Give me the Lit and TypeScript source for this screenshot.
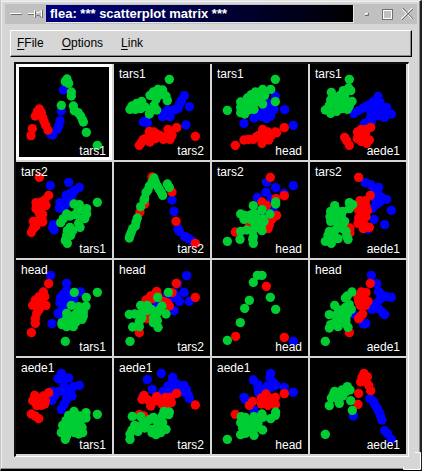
import { LitElement, html, svg, css } from "lit";
import { customElement, property } from "lit/decorators.js";

interface Layer {
  tone: "red" | "green" | "blue";
  dots: string;
}

interface Panel {
  y?: string;
  x: string;
  /** Left edge of the panel in the units of its dots. */
  left: number;
  layers: Layer[];
}

const blue = (dots: string): Layer => ({ tone: "blue", dots });
const red = (dots: string): Layer => ({ tone: "red", dots });
const green = (dots: string): Layer => ({ tone: "green", dots });

const panels: Panel[] = [
  {
    x: "tars1", left: 18, layers: [
      blue("160,90 154,153 150,182 147,196 142,208 128,225 122,222"),
      red("63,227 67,206 76,168 82,155 88,147 94,158 98,172 102,184 107,196 114,210 88,160"),
      green("171,57 166,65 176,70 172,66 184,96 184,108 154,136 190,138 193,152 204,158 212,168 218,180 220,186 229,217 262,256"),
    ],
  },
  {
    y: "tars1", x: "tars2", left: 12, layers: [
      blue("223,107 214,122 208,134 204,146 238,140 228,195 192,150 180,158 164,158 158,170 180,170 174,150 100,186 112,188 108,182"),
      red("200,203 174,208 182,216 186,226 180,238 160,238 172,228 150,226 140,222 136,236 120,246 118,214 132,216 100,238 88,256 94,248 256,229 124,230 110,234"),
      green("178,58 144,88 158,90 130,96 120,106 150,104 168,108 172,122 138,118 95,124 80,130 66,138 60,148 76,148 92,146 104,140 132,136 140,150 118,162 124,152"),
    ],
  },
  {
    y: "tars1", x: "head", left: 306, layers: [
      blue("496,108 476,130 476,144 492,148 480,150 524,149 462,152 448,164 432,174 456,170 482,168 470,160 470,176 402,190 550,196"),
      red("376,256 402,240 416,238 430,238 440,230 458,208 458,220 474,216 496,216 500,218 484,226 470,232 456,236 456,250 446,226 476,240 523,203"),
      green("496,58 482,88 458,88 436,96 424,104 450,104 464,106 412,114 392,126 392,142 392,158 404,162 416,150 432,148 440,126 424,128 408,134 458,132 496,125 452,118 352,151 436,112"),
    ],
  },
  {
    y: "tars1", x: "aede1", left: 6, layers: [
      blue("210,109 206,124 194,126 216,128 178,136 190,140 208,142 236,142 250,162 228,160 230,172 212,168 204,156 188,154 166,144 152,152 138,160 192,166 186,176 170,190 190,186"),
      red("110,232 116,242 124,256 188,202 176,208 160,208 148,216 148,236 160,226 172,224 184,240 176,250 160,244 168,238"),
      green("124,58 70,97 122,84 106,92 128,92 96,106 84,112 68,120 110,110 132,124 112,124 92,126 76,130 64,136 52,150 68,160 86,154 102,146 124,138 118,148 94,140"),
    ],
  },
  {
    y: "tars2", x: "tars1", left: 18, layers: [
      blue("121,82 176,73 208,88 194,98 180,106 168,112 172,124 150,134 148,150 160,142 170,136 186,112 130,200 128,208 132,216 160,152"),
      red("88,58 116,112 104,126 94,132 78,134 78,152 92,148 108,142 88,166 96,180 98,192 84,188 70,190 78,204 70,212 64,223 98,168"),
      green("262,133 192,138 208,140 230,152 220,158 204,158 230,168 196,170 170,168 180,174 160,182 152,194 212,184 224,182 206,196 210,208 180,208 172,218 188,218 170,232 182,232 168,244 172,256 166,248"),
    ],
  },
  {
    x: "tars2", left: 312, layers: [
      blue("486,126 492,160 504,212 508,220 524,236 536,242 530,238 548,250"),
      red("426,57 404,138 390,162 486,102 498,190 556,256"),
      green("432,60 426,72 418,84 414,96 408,104 436,72 442,84 448,94 454,104 458,112 404,122 392,146 382,180 378,192 376,204 368,212 364,222 360,232 358,240 472,78 478,88 402,126"),
    ],
  },
  {
    y: "tars2", x: "head", left: 12, layers: [
      blue("176,73 203,89 174,103 148,118 256,83 186,136 196,150 168,178 190,122 228,106"),
      red("187,58 229,113 162,132 204,122 206,172 190,186 196,178 184,200 82,222 180,212 124,198 176,142 126,206"),
      green("203,138 203,132 136,143 162,155 98,168 110,172 108,184 130,170 142,168 148,184 164,182 186,168 168,190 162,218 160,206 140,196 148,208 98,220 96,244 116,216 134,218 136,236 134,244 136,256 58,250 128,184"),
    ],
  },
  {
    y: "tars2", x: "aede1", left: 306, layers: [
      blue("472,74 488,80 512,88 500,98 510,108 498,118 520,118 536,124 516,132 504,140 492,152 550,157 498,184 530,200 480,214"),
      red("452,58 487,112 456,128 472,128 460,144 474,144 478,158 450,154 466,162 452,180 464,186 474,176 450,196 468,200 484,208 466,212 426,210 426,224"),
      green("380,143 424,134 434,140 424,152 404,160 386,158 368,160 366,176 384,172 400,176 410,190 380,188 368,190 404,200 390,206 382,216 364,220 360,232 376,234 352,250 370,256 390,242 414,220 420,244 416,234 404,212"),
    ],
  },
  {
    y: "head", x: "tars1", left: 18, layers: [
      blue("122,58 170,82 212,108 170,104 160,114 180,114 152,124 172,128 192,128 150,140 164,148 156,160 144,172 152,176 178,132 126,203"),
      red("116,83 100,108 88,122 104,122 76,132 68,148 84,146 96,144 108,148 88,160 80,172 76,188 76,202 64,230 90,134"),
      green("193,109 262,109 229,124 184,148 206,152 228,150 204,164 220,168 196,176 214,178 170,172 170,188 186,184 156,206 170,212 190,212 178,200 198,198 216,190 220,180 166,256 156,200"),
    ],
  },
  {
    y: "head", x: "tars2", left: 312, layers: [
      blue("530,59 522,109 508,136 538,136 492,164 484,126 498,122 502,84 492,112 438,146 472,118"),
      red("499,82 556,124 440,106 422,120 408,132 428,128 444,120 462,136 470,140 478,150 388,230 410,188 420,180 486,110"),
      green("475,109 443,124 392,148 412,148 456,150 448,162 468,174 440,174 424,160 410,164 392,172 374,174 358,175 396,186 388,196 368,213 388,212 430,186 442,194 430,200 444,214 360,256"),
    ],
  },
  {
    x: "head", left: 12, layers: [
      green("148,58 162,58 136,79 124,133 110,157 97,200 58,253 187,124 203,160"),
      blue("256,256"),
      red("175,91 83,241 229,244"),
    ],
  },
  {
    y: "head", x: "aede1", left: 306, layers: [
      blue("490,58 506,83 512,106 520,116 536,122 550,124 516,130 504,144 492,160 512,158 524,170 530,176 500,154 436,174 474,202 466,204"),
      red("487,82 460,108 474,110 450,124 466,126 480,136 472,148 456,148 452,136 464,174 452,188 458,180 424,230"),
      green("432,108 418,120 412,126 380,148 424,146 412,154 392,162 430,160 364,176 384,178 404,176 418,174 396,190 414,192 382,198 368,206 364,216 390,212 414,204 420,214 352,256"),
    ],
  },
  {
    y: "aede1", x: "tars1", left: 48, layers: [
      blue("184,58 174,74 206,72 190,82 192,96 220,98 238,94 212,110 190,110 176,112 164,126 200,122 216,126 156,140 200,136 192,152 184,166 156,112"),
      red("94,180 106,186 116,194 104,124 146,116 130,126 98,140 116,140 136,140 110,154 124,154 134,150"),
      green("292,181 222,172 206,184 258,176 240,186 222,188 258,192 198,200 218,204 240,204 208,218 188,214 228,220 246,220 184,236 204,234 224,236 248,236 196,256 200,246 236,240"),
    ],
  },
  {
    y: "aede1", x: "tars2", left: 342, layers: [
      blue("442,77 484,58 457,106 518,70 518,84 504,96 520,98 532,90 552,94 560,108 544,114 566,126 568,134 490,112 508,112 428,128 484,120"),
      red("586,153 530,118 432,124 426,136 444,138 458,144 470,128 452,156 472,140 486,150 496,130 512,130 514,146 490,140 500,152 418,182 432,186"),
      green("397,187 422,188 508,174 506,182 492,172 486,186 460,190 450,196 470,202 440,204 404,214 424,214 396,228 414,232 390,240 434,222 456,226 474,222 498,226 468,242 456,236 482,236 390,256 488,206"),
    ],
  },
  {
    y: "aede1", x: "head", left: 12, layers: [
      blue("136,78 188,58 186,72 150,92 196,86 204,94 150,104 190,100 166,108 108,130 112,136 138,170 229,100 256,115 152,116 178,96"),
      red("229,119 174,120 160,132 184,132 202,130 134,142 124,154 160,150 180,154 202,152 170,144 190,144 82,181"),
      green("203,174 202,184 188,194 162,180 100,188 112,190 138,188 164,190 98,206 118,206 140,206 104,222 126,222 148,220 164,228 98,242 112,238 132,234 138,244 150,208 58,256"),
    ],
  },
  {
    x: "aede1", left: 306, layers: [
      blue("486,134 496,142 502,154 508,164 514,176 518,186 522,198 530,230 538,238 550,256 436,186"),
      red("468,58 462,70 478,68 458,84 474,82 482,94 488,110 452,118 450,151"),
      green("418,98 402,108 380,112 376,122 394,122 412,114 370,132 388,134 404,126 428,140 394,148 364,155 433,169 352,241 426,108"),
    ],
  },
];

@customElement("scatter-panel")
export class ScatterPanel extends LitElement {
  @property({ attribute: false }) panel!: Panel;
  @property({ type: Boolean, reflect: true }) selected = false;

  static styles = css`
    :host {
      display: block;
      position: relative;
      aspect-ratio: 1;
      background: #000;
      color: #fff;
      font: 12px/14px "Liberation Sans", Arial, sans-serif;
    }
    :host([selected])::after {
      content: "";
      position: absolute;
      inset: 0;
      border: 3px solid #fff;
    }
    svg {
      display: block;
      width: 100%;
      height: 100%;
    }
    .red { fill: #ff0000; }
    .green { fill: #00cd32; }
    .blue { fill: #0000ff; }
    .name {
      position: absolute;
    }
    .top {
      top: 3px;
      left: 5px;
    }
    .bottom {
      right: 6px;
      bottom: 2px;
    }
  `;

  render() {
    const { x, y, left, layers } = this.panel;
    return html`
      <svg viewBox="${left} 12 288 288" role="img" aria-label=${y ? `${y} against ${x}` : `Distribution of ${x}`}>
        ${layers.map((layer) => svg`<g class=${layer.tone}>
          ${layer.dots.split(" ").map((dot) => {
            const [cx, cy] = dot.split(",");
            return svg`<circle cx=${cx} cy=${cy} r="14"></circle>`;
          })}
        </g>`)}
      </svg>
      ${y ? html`<span class="name top">${y}</span>` : ""}
      <span class="name bottom">${x}</span>
    `;
  }
}

@customElement("app-root")
export class AppRoot extends LitElement {
  static styles = css`
    :host {
      display: block;
      box-sizing: border-box;
      position: relative;
      min-height: 100vh;
      padding: 3px 3px 12px 4px;
      background: #d6d6d6;
      border: solid;
      border-width: 1px 2px 2px 1px;
      border-color: #e4e4e4 #202020 #000 #c4c4c4;
      box-shadow: inset -1px -1px #8a8a8a, inset 1px 1px #f0f0f0;
      font: 12px/14px "Liberation Sans", Arial, sans-serif;
      color: #000;
    }
    button {
      appearance: none;
      border: 0;
      margin: 0;
      padding: 0;
      background: none;
      color: inherit;
      font: inherit;
    }
    .titlebar {
      display: flex;
      align-items: center;
      height: 20px;
      background: #c0c0c0;
    }
    .title {
      flex: 1;
      margin: 0;
      padding-left: 4px;
      overflow: hidden;
      white-space: nowrap;
      font-size: 13px;
      line-height: 17px;
      color: #fff;
      background: linear-gradient(90deg, #000080, #000010 88%, #000);
      border: solid #e8e8e8;
      border-width: 0 1px 1px 0;
    }
    .tool {
      display: grid;
      place-items: center;
      width: 20px;
      height: 20px;
    }
    .tool svg {
      display: block;
    }
    .left,
    .right {
      display: flex;
    }
    .left {
      padding-right: 1px;
    }
    .right {
      padding-left: 3px;
    }
    .dark { fill: none; stroke: #707070; }
    .light { fill: none; stroke: #fff; }
    .menus {
      display: flex;
      gap: 18px;
      margin: 6px 5px 0 5px;
      padding: 4px 6px;
      border: 1px solid;
      border-color: #fff #000 #000 #fff;
      box-shadow: inset -1px -1px #8a8a8a;
    }
    .menus button {
      line-height: 17px;
    }
    .menus u {
      text-underline-offset: 2px;
    }
    .matrix {
      display: grid;
      grid-template-columns: repeat(4, 1fr);
      gap: 2px;
      margin: 5px 8px 0 9px;
      padding: 0 2px 2px 0;
      border: solid;
      border-width: 2px 1px 1px 2px;
      border-color: #101010 #fff #fff #101010;
    }
    .grip {
      position: absolute;
      right: -2px;
      bottom: -2px;
      width: 20px;
      height: 20px;
    }
    .face { fill: #d6d6d6; }
  `;

  render() {
    return html`
      <header class="titlebar">
        <div class="left">
          <button class="tool" aria-label="Window menu">
            <svg width="14" height="14" viewBox="0 0 14 14">
              <path class="light" d="M2 6.5H13"></path>
              <path class="dark" d="M3 7.5H14"></path>
            </svg>
          </button>
          <button class="tool" aria-label="Keep on all desktops">
            <svg width="16" height="14" viewBox="0 0 16 14">
              <path class="light" d="M1 6.5H7M7.5 3V10M8 4.5L10 5.5H12L14.5 3.5V10"></path>
              <path class="dark" d="M1 7.5H7M8.5 4V11M9 9.5L10 8.5H12L14.5 10.5M15.5 3V11"></path>
            </svg>
          </button>
        </div>
        <h1 class="title">flea: *** scatterplot matrix ***</h1>
        <div class="right">
          <button class="tool" aria-label="Minimize">
            <svg width="14" height="14" viewBox="0 0 14 14">
              <path class="dark" d="M5 8.5H8.5V6"></path>
              <path class="light" d="M5.5 8V6.5H8"></path>
            </svg>
          </button>
          <button class="tool" aria-label="Maximize">
            <svg width="14" height="14" viewBox="0 0 14 14">
              <rect class="light" x="3.5" y="3.5" width="8" height="8"></rect>
              <path class="dark" d="M2.5 12V2.5H12M12.5 2V12.5H2"></path>
            </svg>
          </button>
          <button class="tool" aria-label="Close">
            <svg width="14" height="14" viewBox="0 0 14 14">
              <path class="light" d="M2 2L12 12M12 1L1 12"></path>
              <path class="dark" d="M3 1L13 12M13 2L2 13"></path>
            </svg>
          </button>
        </div>
      </header>
      <nav class="menus">
        <button><u>F</u>File</button>
        <button><u>O</u>ptions</button>
        <button><u>L</u>ink</button>
      </nav>
      <main class="matrix">
        ${panels.map((panel, i) => html`<scatter-panel .panel=${panel} ?selected=${i === 0}></scatter-panel>`)}
      </main>
      <svg class="grip" viewBox="0 0 20 20" aria-hidden="true">
        <path class="face" d="M2 17H17V2H18V18H2Z"></path>
        <path class="light" d="M1.5 16V18.5H18.5V1.5H13"></path>
      </svg>
    `;
  }
}
